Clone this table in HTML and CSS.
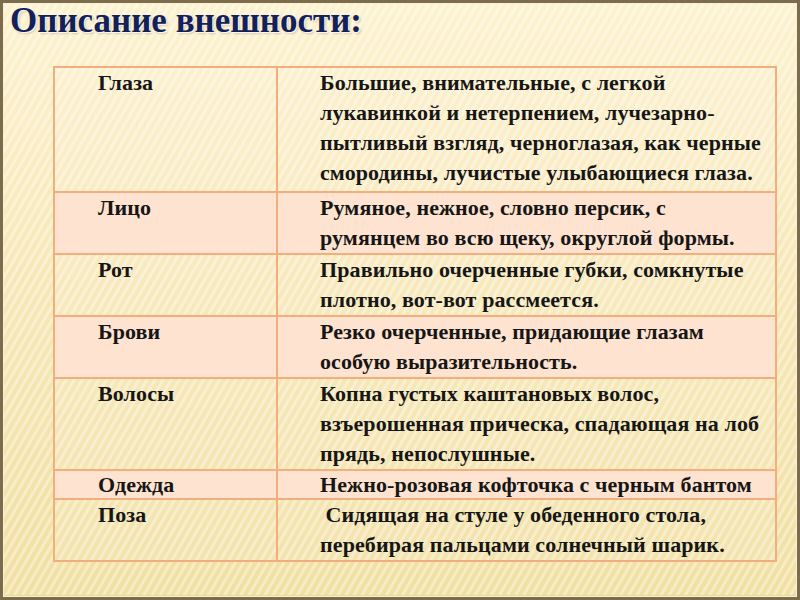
FILE: index.html
```html
<!DOCTYPE html>
<html lang="ru">
<head>
<meta charset="utf-8">
<title>Описание внешности</title>
<link rel="stylesheet" href="styles.css">
</head>
<body>
<div class="slide">
  <h1 class="title">Описание внешности:</h1>
  <table class="desc">
    <tr class="plain tall">
      <td class="key">Глаза</td>
      <td class="val">Большие, внимательные, с легкой<br>лукавинкой и нетерпением, лучезарно-<br>пытливый взгляд, черноглазая, как черные<br>смородины, лучистые улыбающиеся глаза.</td>
    </tr>
    <tr class="pink">
      <td class="key">Лицо</td>
      <td class="val">Румяное, нежное, словно персик, с<br>румянцем во всю щеку, округлой формы.</td>
    </tr>
    <tr class="plain">
      <td class="key">Рот</td>
      <td class="val">Правильно очерченные губки, сомкнутые<br>плотно, вот-вот рассмеется.</td>
    </tr>
    <tr class="pink">
      <td class="key">Брови</td>
      <td class="val">Резко очерченные, придающие глазам<br>особую выразительность.</td>
    </tr>
    <tr class="plain">
      <td class="key">Волосы</td>
      <td class="val">Копна густых каштановых волос,<br>взъерошенная прическа, спадающая на лоб<br>прядь, непослушные.</td>
    </tr>
    <tr class="pink short">
      <td class="key">Одежда</td>
      <td class="val">Нежно-розовая кофточка с черным бантом</td>
    </tr>
    <tr class="plain">
      <td class="key">Поза</td>
      <td class="val">&nbsp;Сидящая на стуле у обеденного стола,<br>перебирая пальцами солнечный шарик.</td>
    </tr>
  </table>
</div>
</body>
</html>
```

FILE: styles.css
```css
html, body {
  margin: 0;
  padding: 0;
}

body {
  width: 800px;
  height: 600px;
  overflow: hidden;
  font-family: "Liberation Serif", "Times New Roman", serif;
}

.slide {
  box-sizing: border-box;
  width: 800px;
  height: 600px;
  border: 3px solid #7a6c4c;
  box-shadow: inset 0 0 0 1px #fbf1cf, inset 0 -5px 0 -3px #e9d9a0;
  background:
    repeating-linear-gradient(120deg,
      rgba(255, 255, 255, 0) 0px,
      rgba(255, 255, 255, 0) 3px,
      rgba(255, 255, 255, 0.38) 4px,
      rgba(255, 255, 255, 0.38) 6px,
      rgba(255, 255, 255, 0) 7px),
    linear-gradient(180deg, #fdf2cf 0%, #f8e8b8 45%, #f1e0a2 100%);
  padding: 0 0 0 7px;
}

.title {
  margin: 0;
  font-family: "Liberation Serif", "Times New Roman", serif;
  font-size: 35px;
  line-height: 36px;
  font-weight: bold;
  color: #13215a;
  text-shadow: 1px 1px 0 rgba(255, 255, 255, 0.85), 2px 2px 2px rgba(120, 110, 80, 0.3);
}

.desc {
  margin: 27px 0 0 43px;
  width: 724px;
  border-collapse: collapse;
  border: 2px solid #f2ae7c;
  font-family: "Liberation Serif", "Times New Roman", serif;
  font-size: 22px;
  letter-spacing: 0.1px;
  font-weight: bold;
  color: #161616;
}

.desc td {
  border: 2px solid #f2ae7c;
  padding: 0;
  line-height: 30px;
  vertical-align: top;
  white-space: nowrap;
}

.desc .tall td {
  padding-bottom: 3px;
}

.desc .short td {
  line-height: 27px;
}

.key {
  width: 223px;
  box-sizing: border-box;
  padding-left: 43px !important;
}

.val {
  padding-left: 42px !important;
}

.plain {
  background: rgba(255, 250, 235, 0.12);
}

.pink {
  background: #fde3d0;
}
```
